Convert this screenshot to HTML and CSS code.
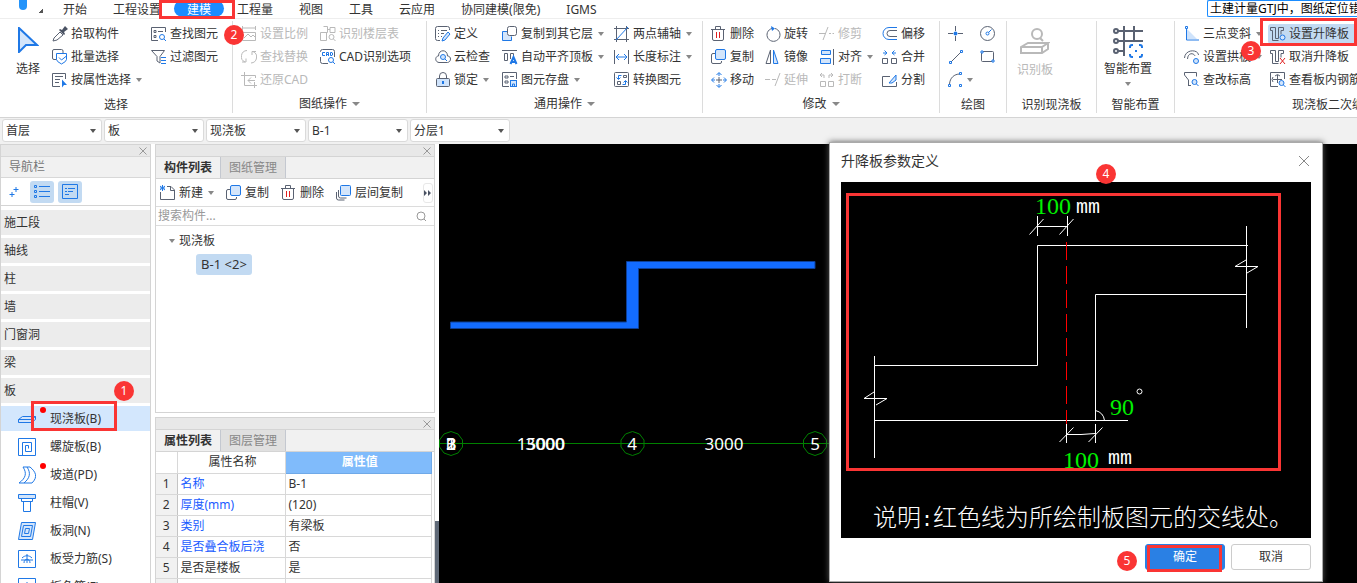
FILE: index.html
```html
<!DOCTYPE html>
<html lang="zh-CN">
<head>
<meta charset="utf-8">
<title>土建计量GTJ</title>
<link rel="stylesheet" href="styles.css">
</head>
<body>
<svg class="defs" aria-hidden="true">
  <symbol id="i-pick" viewBox="0 0 16 16"><path d="M1 15l1-3 6-6 3 3-6 5z"/><path class="k" d="M7 4l1-1 2 1 3-4 3 3-4 3 1 2-1 1z"/></symbol>
  <symbol id="i-batch" viewBox="0 0 16 16"><path d="M5 10.500H2Q.5 10.500.5 9V2Q.5.5 2 .5h7.500Q11 .5 11 2v2"/><path class="b w" d="M4.500 4.500h10v6q0 2-5 4.500-5-2.500-5-4.500z"/><path class="b" d="M7 8.500l2.500 2.500 5-4"/></symbol>
  <symbol id="i-prop" viewBox="0 0 16 16"><path d="M8 14.500H.5v-13h13V7M3 4.500h8M3 7.500h5M3 10.500h4"/><path class="s" d="M10 7.500v8l2-2.500h3z"/></symbol>
  <symbol id="i-find" viewBox="0 0 16 16"><path d="M7 14.500H.5v-13h14V6M3 4.500h2v2H3zM7 5.500h5M3 9.500h2v2H3z"/><circle class="b" cx="11" cy="11" r="2.500"/><path class="b" d="M13 13l2 2"/></symbol>
  <symbol id="i-filter" viewBox="0 0 16 16"><path d="M.5 1.500h13L9 7.500V14l-3-2V7.500z"/><path class="b" d="M10 8.500h5M10 11.500h5M10 14.500h5"/></symbol>
  <symbol id="i-scale" viewBox="0 0 16 16"><path class="g" d="M1.500 0v4M14.500 0v4M1 2h14M1.500 6.500h13v8h-13zM3 12l4-4 3 3 2-2 2 2"/></symbol>
  <symbol id="i-replace" viewBox="0 0 16 16"><path class="g" d="M6 1.500a6 6 0 00-2 11.500M10 14a6 6 0 002-11.500M1 13h4v-3.500M15 2.500h-4V6"/></symbol>
  <symbol id="i-restore" viewBox="0 0 16 16"><path class="g" d="M3.500 0v13.500H16M0 3.500h14.500V6M13.500 10v6M14 8.500H7m3-3l-3 3 3 3"/></symbol>
  <symbol id="i-floor" viewBox="0 0 16 16"><path class="g" d="M3.500.5h4v6h-4M.5 6.500v8h6v-8zM10 1.500h5v5h-5zM7.500 3.500H10"/><circle class="g" cx="11.500" cy="11" r="2.500"/><path class="g" d="M13.500 13l2 2"/></symbol>
  <symbol id="i-cad" viewBox="0 0 16 16"><path d="M8 14.500H2.500q-2 0-2-2V8M14.500 8V2.500q0-2-2-2h-10q-2 0-2 2V3"/><path class="b" d="M5 3.500H2.500v3H5M6.500 7V3.500h2V7M6.500 5.500h2M10.500 3.500v3h1.500q1.500-1.500 0-3z"/><circle class="b" cx="11" cy="11" r="2.500"/><path class="b" d="M13 13l2 2"/></symbol>
  <symbol id="i-define" viewBox="0 0 16 16"><path d="M5 14.500H2.500q-2 0-2-2v-10q0-2 2-2h10q2 0 2 2V4M3 4.500h1M6 4.500h6M3 7.500h1M6 7.500h3M3 10.500h1M6 10.500h1"/><path class="f" d="M7 15l1-3 5-6 2 2-5 6z"/></symbol>
  <symbol id="i-cloud" viewBox="0 0 16 16"><path d="M4 13.500C-.5 13 0 7 3.500 7 3.500 0 12.500 0 12.500 7c4 0 4 6 0 6.500z"/><circle class="f" cx="8" cy="8" r="2.500"/><path class="b" d="M10 10l2 2"/></symbol>
  <symbol id="i-lock" viewBox="0 0 16 16"><path d="M4.500 6V4q0-3.500 3.500-3.500T11.500 4v2"/><rect class="lf" x="1.500" y="6.500" width="13" height="8" rx="1"/><path class="s" d="M7 9h2v3H7z"/></symbol>
  <symbol id="i-copy" viewBox="0 0 16 16"><path d="M4 4.500H2q-1.500 0-1.500 1.500v7q0 1.500 1.500 1.500h7q1.500 0 1.500-1.500v-1"/><rect class="f" x="4.500" y=".5" width="10" height="10" rx="1.500"/></symbol>
  <symbol id="i-copyto" viewBox="0 0 16 16"><path class="f" d="M6.500 5.500h-6v9h9v-4"/><rect class="w" x="5.500" y=".5" width="9" height="9" rx="2"/></symbol>
  <symbol id="i-aligntop" viewBox="0 0 16 16"><path d="M0 1.500h15M2.500 4.500h3v7h-3zM8.500 10V4.500h3V7"/><path class="b h" d="M8.500 15l3-7 3 7M9.500 13h4"/></symbol>
  <symbol id="i-save" viewBox="0 0 16 16"><path d="M7 14.500H.5v-14h14V7M3 4h3v2H3zM8 4.500h4M3 9h3v2H3z"/><rect class="f" x="8.500" y="8.500" width="6" height="6"/><path class="b" d="M10.500 14v-2h2v2"/></symbol>
  <symbol id="i-axis" viewBox="0 0 16 16"><path d="M2.500 0v16M12.500 0v16M0 2.500h15M0 13.500h15"/><path class="b" d="M2 14L14 1"/></symbol>
  <symbol id="i-length" viewBox="0 0 16 16"><path d="M.5 1v14M14.500 1v14"/><path class="b" d="M2 8h11M5 5L2 8l3 3M10 5l3 3-3 3"/></symbol>
  <symbol id="i-convert" viewBox="0 0 16 16"><rect x=".5" y=".5" width="14" height="14" rx="1"/><path d="M3.500 9.500h3v3h-3zM9.500 3.500h3v2h-3z"/><path class="b" d="M7.500 3.500h-3V7M2.500 5.500l2 2 2-2M8.500 12.500h3V9M9.500 10.500l2-2 2 2"/></symbol>
  <symbol id="i-trash" viewBox="0 0 16 16"><path d="M0 3.500h14M4.500 3V.5h5V3M1.500 4v9q0 1.500 1.500 1.500h8q1.500 0 1.500-1.500V4"/><path class="r" d="M5.500 6v6M8.500 6v6"/></symbol>
  <symbol id="i-move" viewBox="0 0 16 16"><path class="b" d="M5.500 3L8 .5 10.500 3M5.500 13L8 15.500l2.500-2.500M3 5.500L.5 8 3 10.500M13 5.500L15.500 8 13 10.500M8 1v3M8 12v3M1 8h3M12 8h3"/><path d="M8 5v6M5 8h6"/></symbol>
  <symbol id="i-rotate" viewBox="0 0 16 16"><path d="M7 2.500a6.500 6.500 0 103 0"/><path class="s" d="M6 0l4 2.500L7 5z"/></symbol>
  <symbol id="i-mirror" viewBox="0 0 16 16"><path d="M5.500 1v13.500H1z"/><path class="f" d="M8.500 1v13.500H13z"/></symbol>
  <symbol id="i-extend" viewBox="0 0 16 16"><path class="g" d="M0 7.500h5M7 7.500h4M10 14l5-13"/></symbol>
  <symbol id="i-trim" viewBox="0 0 16 16"><path class="g" d="M0 7.500h7M10 7.500h2M13.500 7.500H15M4 14l5-13"/></symbol>
  <symbol id="i-align" viewBox="0 0 16 16"><path d="M14.500 0v16"/><path class="f" d="M2.500 1.500h9v4h-9zM1.500 9.500h10v5h-10z"/></symbol>
  <symbol id="i-break" viewBox="0 0 16 16"><path class="g" d="M1.500 9.500h5v5h-5zM9.500 9.500h5v5h-5zM5 6V3H1M3 1L1 3l2 2M10 6V3h4M12 1l2 2-2 2"/></symbol>
  <symbol id="i-offset" viewBox="0 0 16 16"><path class="b" d="M15 1.500H7a6 6 0 000 12h8"/><path d="M15 4.500H8a3 3 0 000 6h7"/></symbol>
  <symbol id="i-merge" viewBox="0 0 16 16"><path d="M.5 9.500h5v5h-5zM9.500 9.500h5v5h-5z"/><path class="b" d="M1 4h3M2.500 1.500L5 4 2.500 6M14 4h-3M12.500 1.500L10 4l2.500 2"/></symbol>
  <symbol id="i-split" viewBox="0 0 16 16"><path d="M8 4.500H.5v10h14V10"/><path class="f" d="M7 11l7-8v5l-4 3z"/></symbol>
  <symbol id="i-point" viewBox="0 0 16 16"><path d="M7.500 0v5M7.500 10v5M0 7.500h5M10 7.500h5"/><circle class="s" cx="7.500" cy="7.500" r="2"/></symbol>
  <symbol id="i-circle" viewBox="0 0 16 16"><circle cx="7.500" cy="7.500" r="7"/><path class="b" d="M8.500 6.500l3-3"/><circle class="b" cx="7.500" cy="7.500" r="1.500"/></symbol>
  <symbol id="i-line" viewBox="0 0 16 16"><path d="M3 13L13 3"/><path class="b" d="M1.500 12.500h2v2h-2zM12.500 1.500h2v2h-2z"/></symbol>
  <symbol id="i-rect" viewBox="0 0 16 16"><rect x="1.500" y="2.500" width="12" height="10" rx="1"/><path class="b w" d="M1 2h2v2H1zM12 11h2v2h-2z"/></symbol>
  <symbol id="i-arc" viewBox="0 0 16 16"><path d="M1.500 12C2 6 6 2 12 2"/><path class="b" d="M.5 12.500h2v2h-2zM11.500.5h2v2h-2zM11.500 12.500h2v2h-2z"/></symbol>
  <symbol id="i-slope" viewBox="0 0 16 16"><path class="lf n" d="M3 3l10 10H3z"/><path class="b" d="M2.500 2v12H15M1.500.5h2v2h-2z"/></symbol>
  <symbol id="i-arch" viewBox="0 0 16 16"><path d="M.5 9C1 0 14 0 14.500 6M3.500 10C4 3 10 4 11 7"/><circle class="f" cx="12" cy="12" r="2.500"/></symbol>
  <symbol id="i-elev" viewBox="0 0 16 16"><path d="M4.500 14V8L.5 3V.5h12v4M4.500 13.500H7"/><circle class="f" cx="10.500" cy="10" r="2.500"/><path class="b" d="M12.500 12l2 2"/></symbol>
  <symbol id="i-lift" viewBox="0 0 16 16"><path d="M.5 1.500h5v11h3v-11h5v3H11v4M.5 1.500v3h2v10h6"/><circle class="f" cx="12.500" cy="11.500" r="2.500"/></symbol>
  <symbol id="i-unlift" viewBox="0 0 16 16"><path d="M.5 1.500h5v11h3v-11h5v3H11v4M.5 1.500v3h2v10h6"/><path class="r" d="M10 9l5 6M15 9l-5 6"/></symbol>
  <symbol id="i-rebar" viewBox="0 0 16 16"><path d="M8 14.500H.5V.5h14V7M3 7.500h9M7.500 3v8M5 4l2.500-1.500L10 4M3 5L2 7.500 3 10"/><circle class="f" cx="11.500" cy="11" r="2.500"/><path class="b" d="M13.500 13l2 2"/></symbol>
  <symbol id="i-new" viewBox="0 0 16 16"><path d="M7 1.500h4l3.500 3.500v9.500H.5V7M10.500 2v3.500H14"/><path class="b" d="M0 1l5 4M5 1L0 5M2.500 0v6M0 3h5"/></symbol>
  <symbol id="i-layers" viewBox="0 0 16 16"><path d="M.5 7v6q0 2 2 2h6M2.500 5v6q0 2 2 2h6"/><rect class="f" x="4.500" y=".5" width="10" height="10" rx="1"/></symbol>
  <symbol id="n-slab" viewBox="0 0 18 18"><path class="f" d="M.5 9.500l4-3h13v3l-4 3H.5zM.5 9.500h13l4-3"/></symbol>
  <symbol id="n-spiral" viewBox="0 0 18 18"><path class="b" d="M.5 17.500V.5h17v17zM4.500 17V4.500h9v9h-6v-6h3v3"/></symbol>
  <symbol id="n-ramp" viewBox="0 0 18 18"><path class="b" d="M5 1h7c6 5 8 10 2 16M5 1c4 6 3 11-4 16M1 17h13M9 1c4 6 3 11-3 16"/></symbol>
  <symbol id="n-cap" viewBox="0 0 18 18"><path class="f" d="M.5.5h17v4H.5z"/><path class="b" d="M3.500 4.500h11v3h-11zM5.500 7.500h7v10h-7z"/></symbol>
  <symbol id="n-hole" viewBox="0 0 18 18"><path class="f" d="M3.500.5h14l-3 17H.5z"/><path class="b" d="M5.500 3.500h9l-2 11h-9zM7.500 6.500h4l-1 5h-4z"/></symbol>
  <symbol id="n-bar" viewBox="0 0 18 18"><path class="b" d="M.5.5h17v17H.5zM9 4v9M4 8c3-3 7-3 10 0M3 10h12M6 13c0-5 6-5 6 0"/></symbol>
</svg>

<div class="app">
  <header>
    <nav class="menu">
      <svg class="drop" viewBox="0 0 10 11"><path d="M1 0h8v6a4 4 0 01-8 0z"/></svg>
      <span class="corner"></span>
      <a href="#">开始</a><a href="#">工程设置</a><a href="#" class="on">建模</a><a href="#">工程量</a><a href="#">视图</a><a href="#">工具</a><a href="#">云应用</a><a href="#">协同建模(限免)</a><a href="#">IGMS</a>
      <input class="tip" aria-label="搜索帮助" value="土建计量GTJ中，图纸定位错误怎么办">
    </nav>

    <div class="ribbon">
      <section class="group g1">
        <div class="cols">
          <button class="big"><svg viewBox="0 0 22 26"><path class="f h" d="M2 1l18 17H9l-7 7z"/></svg>选择</button>
          <div><button class="tool"><svg><use href="#i-pick"/></svg>拾取构件</button><button class="tool"><svg><use href="#i-batch"/></svg>批量选择</button><button class="tool arrow"><svg><use href="#i-prop"/></svg>按属性选择</button></div>
          <div><button class="tool"><svg><use href="#i-find"/></svg>查找图元</button><button class="tool"><svg><use href="#i-filter"/></svg>过滤图元</button></div>
        </div>
        <h2>选择</h2>
      </section>
      <section class="group g2">
        <div class="cols">
          <div><button class="tool" disabled><svg><use href="#i-scale"/></svg>设置比例</button><button class="tool" disabled><svg><use href="#i-replace"/></svg>查找替换</button><button class="tool" disabled><svg><use href="#i-restore"/></svg>还原CAD</button></div>
          <div><button class="tool" disabled><svg><use href="#i-floor"/></svg>识别楼层表</button><button class="tool"><svg><use href="#i-cad"/></svg>CAD识别选项</button></div>
        </div>
        <h2 class="arrow">图纸操作</h2>
      </section>
      <section class="group g3">
        <div class="cols">
          <div><button class="tool"><svg><use href="#i-define"/></svg>定义</button><button class="tool"><svg><use href="#i-cloud"/></svg>云检查</button><button class="tool arrow"><svg><use href="#i-lock"/></svg>锁定</button></div>
          <div><button class="tool arrow"><svg><use href="#i-copyto"/></svg>复制到其它层</button><button class="tool arrow"><svg><use href="#i-aligntop"/></svg>自动平齐顶板</button><button class="tool arrow"><svg><use href="#i-save"/></svg>图元存盘</button></div>
          <div><button class="tool arrow"><svg><use href="#i-axis"/></svg>两点辅轴</button><button class="tool arrow"><svg><use href="#i-length"/></svg>长度标注</button><button class="tool"><svg><use href="#i-convert"/></svg>转换图元</button></div>
        </div>
        <h2 class="arrow">通用操作</h2>
      </section>
      <section class="group g4">
        <div class="cols">
          <div><button class="tool"><svg><use href="#i-trash"/></svg>删除</button><button class="tool"><svg><use href="#i-copy"/></svg>复制</button><button class="tool"><svg><use href="#i-move"/></svg>移动</button></div>
          <div><button class="tool"><svg><use href="#i-rotate"/></svg>旋转</button><button class="tool"><svg><use href="#i-mirror"/></svg>镜像</button><button class="tool" disabled><svg><use href="#i-extend"/></svg>延伸</button></div>
          <div><button class="tool" disabled><svg><use href="#i-trim"/></svg>修剪</button><button class="tool arrow"><svg><use href="#i-align"/></svg>对齐</button><button class="tool" disabled><svg><use href="#i-break"/></svg>打断</button></div>
          <div><button class="tool"><svg><use href="#i-offset"/></svg>偏移</button><button class="tool"><svg><use href="#i-merge"/></svg>合并</button><button class="tool"><svg><use href="#i-split"/></svg>分割</button></div>
        </div>
        <h2 class="arrow">修改</h2>
      </section>
      <section class="group g5">
        <div class="cols">
          <div><button class="tool" aria-label="点"><svg><use href="#i-point"/></svg></button><button class="tool" aria-label="直线"><svg><use href="#i-line"/></svg></button><button class="tool arrow tight" aria-label="弧"><svg><use href="#i-arc"/></svg></button></div>
          <div><button class="tool" aria-label="圆"><svg><use href="#i-circle"/></svg></button><button class="tool" aria-label="矩形"><svg><use href="#i-rect"/></svg></button></div>
        </div>
        <h2>绘图</h2>
      </section>
      <section class="group g6">
        <div class="cols">
          <button class="big" disabled><svg class="wide" viewBox="0 0 30 28"><circle class="g h" cx="17" cy="7" r="5"/><path class="g h" d="M20 11l3 3M1 20l7-4h20l-6 4zM1 20v6h21l6-4v-6M22 20v6"/></svg>识别板</button>
        </div>
        <h2>识别现浇板</h2>
      </section>
      <section class="group g7">
        <div class="cols">
          <button class="big more"><svg class="wide tall" viewBox="0 0 32 32"><path class="h" d="M6 5h25M6 15h25M6 25h6M12 0v30M22 0v15"/><circle class="h" cx="4" cy="5" r="2"/><circle class="h" cx="4" cy="15" r="2"/><circle class="h" cx="4" cy="25" r="2"/><path class="b h" d="M18 22v-1q0-2 2-2h1M27 19h1q2 0 2 2v1M30 28v1q0 2-2 2h-1M21 31h-1q-2 0-2-2v-1M23 25h2"/></svg>智能布置</button>
        </div>
        <h2>智能布置</h2>
      </section>
      <section class="group g8">
        <div class="cols">
          <div><button class="tool arrow"><svg><use href="#i-slope"/></svg>三点变斜</button><button class="tool arrow"><svg><use href="#i-arch"/></svg>设置拱板</button><button class="tool"><svg><use href="#i-elev"/></svg>查改标高</button></div>
          <div><button class="tool lit"><svg><use href="#i-lift"/></svg>设置升降板</button><button class="tool"><svg><use href="#i-unlift"/></svg>取消升降板</button><button class="tool"><svg><use href="#i-rebar"/></svg>查看板内钢筋</button></div>
        </div>
        <h2>现浇板二次编辑</h2>
      </section>
    </div>
  </header>

  <div class="pickers">
    <label><select aria-label="楼层"><option>首层</option></select></label>
    <label><select aria-label="类别"><option>板</option></select></label>
    <label><select aria-label="构件类型"><option>现浇板</option></select></label>
    <label><select aria-label="构件"><option>B-1</option></select></label>
    <label><select aria-label="分层"><option>分层1</option></select></label>
  </div>

  <main>
    <aside class="panel nav">
      <div class="grip"><button aria-label="关闭"><svg viewBox="0 0 8 8"><path d="M.5.5l7 7M7.500.5l-7 7"/></svg></button></div>
      <h3>导航栏</h3>
      <div class="navtools">
        <button aria-label="展开"><svg viewBox="0 0 16 16"><path class="b" d="M7.500 5.500h5M10 3v5M3.500 10.500h5M6 8v5"/></svg></button>
        <button class="set" aria-label="列表"><svg viewBox="0 0 16 16"><path class="b" d="M.5 1.500h2v2h-2zM.5 6.500h2v2h-2zM.5 11.500h2v2h-2zM5 2.500h11M5 7.500h11M5 12.500h11"/></svg></button>
        <button class="set" aria-label="详情"><svg viewBox="0 0 16 16"><path class="b" d="M.5.5h15v14H.5zM3 4.500h2M6 4.500h7M3 7.500h2M6 7.500h5M3 10.500h4"/></svg></button>
      </div>
      <ul class="cats"><li>施工段</li><li>轴线</li><li>柱</li><li>墙</li><li>门窗洞</li><li>梁</li><li>板</li></ul>
      <ul class="subs">
        <li class="cur dot"><svg><use href="#n-slab"/></svg>现浇板(B)</li>
        <li><svg><use href="#n-spiral"/></svg>螺旋板(B)</li>
        <li class="dot"><svg><use href="#n-ramp"/></svg>坡道(PD)</li>
        <li><svg><use href="#n-cap"/></svg>柱帽(V)</li>
        <li><svg><use href="#n-hole"/></svg>板洞(N)</li>
        <li><svg><use href="#n-bar"/></svg>板受力筋(S)</li>
        <li><svg><use href="#n-bar"/></svg>板负筋(F)</li>
      </ul>
    </aside>

    <div class="side">
      <section class="panel list">
        <div class="grip"><button aria-label="关闭"><svg viewBox="0 0 8 8"><path d="M.5.5l7 7M7.500.5l-7 7"/></svg></button></div>
        <div class="tabs"><button class="on">构件列表</button><button>图纸管理</button></div>
        <div class="bar">
          <button class="tool arrow"><svg><use href="#i-new"/></svg>新建</button><button class="tool"><svg><use href="#i-copy"/></svg>复制</button><button class="tool"><svg><use href="#i-trash"/></svg>删除</button><button class="tool"><svg><use href="#i-layers"/></svg>层间复制</button>
          <button class="overflow" aria-label="更多"><svg viewBox="0 0 8 6"><path class="k" d="M0 0l3 3-3 3zM4 0l3 3-3 3z"/></svg></button>
        </div>
        <div class="search"><input aria-label="搜索构件" placeholder="搜索构件..."><svg viewBox="0 0 11 11"><circle cx="5" cy="5" r="4"/><path d="M8 8l2 2"/></svg></div>
        <div class="tree"><div class="branch">现浇板</div><div class="leaf">B-1 &lt;2&gt;</div></div>
      </section>
      <section class="panel props">
        <div class="grip"><button aria-label="关闭"><svg viewBox="0 0 8 8"><path d="M.5.5l7 7M7.500.5l-7 7"/></svg></button></div>
        <div class="tabs"><button class="on">属性列表</button><button>图层管理</button></div>
        <table>
          <thead><tr><th></th><th>属性名称</th><th class="val">属性值</th></tr></thead>
          <tbody>
            <tr><td>1</td><td class="key">名称</td><td>B-1</td></tr>
            <tr><td>2</td><td class="key">厚度(mm)</td><td>(120)</td></tr>
            <tr><td>3</td><td class="key">类别</td><td>有梁板</td></tr>
            <tr><td>4</td><td class="key">是否叠合板后浇</td><td>否</td></tr>
            <tr><td>5</td><td>是否是楼板</td><td>是</td></tr>
            <tr><td></td><td></td><td></td></tr>
          </tbody>
        </table>
      </section>
    </div>
    <div class="splitter"><span></span></div>

    <div class="canvas">
      <svg class="plan">
        <g transform="translate(-439 -144)">
          <path class="slab" d="M450.500 322H626.500V261.500H815V268.500H638.500V328.500H450.500z"/>
          <path class="axis" d="M439 443.500H829"/>
          <g class="axis">
            <path d="M451 431.500l7 2.500 4.500 6v7l-4.500 6-7 2.500-7-2.500-4.500-6v-7l4.500-6z"/>
            <path d="M632.500 431.500l7 2.500 4.500 6v7l-4.500 6-7 2.500-7-2.500-4.500-6v-7l4.500-6z"/>
            <path d="M815 431.500l7 2.500 4.500 6v7l-4.500 6-7 2.500-7-2.500-4.500-6v-7l4.500-6z"/>
          </g>
          <g class="dim">
            <text x="451" y="450">1</text><text x="451" y="450">2</text><text x="451" y="450">3</text><text x="451" y="450">B</text>
            <text x="541" y="450">15000</text><text x="545" y="450">3000</text>
            <text x="632" y="450">4</text><text x="724" y="450">3000</text><text x="815" y="450">5</text>
          </g>
        </g>
      </svg>

      <div class="dialog" role="dialog" aria-labelledby="dlg">
        <div class="dhead"><h1 id="dlg">升降板参数定义</h1><button aria-label="关闭"><svg viewBox="0 0 12 12"><path d="M1 1l10 10M11 1L1 11"/></svg></button></div>
        <svg class="figure" viewBox="841 182 470 356">
          <path class="ln" d="M1037.500 216v20M1067.500 216v20M1037.500 226.500h30M1029.500 234.500l14-15.500M1059.500 234.500l14-15.500"/>
          <path class="ln" d="M874 365.500h163.500v-120H1248M874 420.500h254M1095.500 420V294.500h151M874.500 356v102M1246.500 226v102"/>
          <path class="ln" d="M874 392l-10 6.500h23l-11 6.500M1246 260l-11 6.500h23l-11 6.500M1095.500 410.500q8 2 9 10"/>
          <path class="ln" d="M1066.500 424v19M1095.500 424v19M1067 434.500h14l14-1M1059.500 442l14-14.500M1088.500 442l14-14.500"/>
          <path class="cut" d="M1066.500 242v182"/>
          <g class="num"><text x="1035" y="214">100</text><text x="1110" y="415">90</text><text x="1063" y="468">100</text></g>
          <g class="unit"><text x="1076" y="213">mm</text><text x="1108" y="464">mm</text></g>
          <circle class="ln" cx="1139.500" cy="391.500" r="2.500"/>
          <text class="note" x="873" y="526">说明<tspan class="colon">:</tspan>红色线为所绘制板图元的交线处。</text>
        </svg>
        <div class="dfoot"><button class="ok">确定</button><button>取消</button></div>
        <span class="frame f4"></span><span class="frame f5"></span>
        <b class="badge b4">4</b><b class="badge b5">5</b>
      </div>
    </div>
  </main>

  <span class="frame f1"></span><span class="frame f2"></span><span class="frame f3"></span>
  <b class="badge b1">1</b><b class="badge b2">2</b><b class="badge b3">3</b>
</div>
</body>
</html>
```
FILE: styles.css
```css
* { box-sizing: border-box; }
body { margin: 0; overflow: hidden; font: 12px/18px "Noto Sans", "Noto Sans CJK SC", sans-serif; color: #333; background: #fff; }
button, input, select { font: inherit; color: inherit; border: 0; padding: 0; background: none; }
h1, h2, h3, ul { margin: 0; padding: 0; font-size: 12px; font-weight: 400; list-style: none; }
.defs { position: absolute; width: 0; height: 0; }
svg { flex: none; fill: none; stroke: #5a6272; stroke-width: 1; }

.b { stroke: #1f78e6; }
.f { stroke: #1f78e6; fill: #d3e5fb; }
.lf { fill: #cfe3fb; }
.w { fill: #fff; }
.s { fill: #1f78e6; stroke: none; }
.k { fill: #4a5263; stroke: none; }
.g { stroke: #b9b9b9; }
.r { stroke: #e02020; }
.n { stroke: none; }
.h { stroke-width: 2; }

.app { position: relative; display: flex; flex-direction: column; height: 100vh; overflow: hidden; }

/* Menu row */
.menu { display: flex; height: 19px; padding-left: 18px; border-bottom: 1px solid #eee; white-space: nowrap; }
.menu a { padding: 0 13px; color: #333; text-decoration: none; line-height: 19px; }
.menu .on { height: 17px; border-radius: 9px; background: #1a8cff; color: #fff; }
.drop { width: 10px; height: 11px; }
.drop path { fill: #2393fa; stroke: none; }
.corner { width: 4px; height: 4px; margin: 9px 7px 0 11px; background: linear-gradient(135deg, transparent 50%, #555 50%); }
.tip { width: 150px; height: 17px; margin-left: auto; padding-left: 2px; border: 1px solid #1a8cff; border-right: 0; border-radius: 2px 0 0 2px; color: #000; }

/* Ribbon */
.ribbon { display: flex; padding: 2px 0 4px; border-bottom: 1px solid #d4d4d4; overflow: hidden; white-space: nowrap; }
.group { flex: none; border-right: 1px solid #dcdcdc; }
.cols { display: grid; height: 70px; padding: 1px 0 0 8px; }
.group h2 { padding-top: 4px; height: 22px; line-height: 20px; text-align: center; }
.group h2.arrow { padding-top: 3px; }
.g1 .cols { padding-left: 9px; grid-template-columns: 43px 99px 81px; }
.g2 .cols { grid-template-columns: 79px 106px; }
.g3 .cols { grid-template-columns: 67px 112px 88px; }
.g4 .cols { grid-template-columns: 54px 54px 63px 57px; }
.g5 .cols { grid-template-columns: 32px 26px; }
.g6 .cols { padding-left: 9px; grid-template-columns: 80px; }
.g7 .cols { padding-left: 6px; grid-template-columns: 71px; }
.g8 .cols { padding-left: 9px; grid-template-columns: 86px 223px; }
.tool { display: flex; align-items: center; gap: 3px; height: 23px; white-space: nowrap; }
.tool svg { width: 16px; height: 16px; }
.tool:disabled, .big:disabled { color: #b9b9b9; }
.arrow::after { content: ""; border: 3px solid transparent; border-top: 4px solid #888; border-bottom: 0; margin-left: 2px; }
.tight::after { margin-left: 0; }
h2.arrow::after { display: inline-block; border-width: 4px 4px 0; margin: 0 0 2px 5px; }
.lit { width: 120px; height: 20px; margin: 2px 0 1px -2px; padding-left: 2px; border-radius: 3px; background: #c2daf2; }
.big { display: flex; flex-direction: column; align-items: center; justify-self: start; width: 38px; height: 69px; padding-top: 5px; }
.big svg { width: 22px; height: 26px; margin-bottom: 7px; }
.big svg.wide { width: 30px; height: 28px; margin-bottom: 6px; }
.big svg.tall { width: 32px; height: 32px; margin-bottom: 2px; }
.more { width: 50px; padding-top: 4px; }
.more::after { content: ""; margin-top: 4px; border: 3px solid transparent; border-top: 4px solid #888; border-bottom: 0; }

/* Floor and component pickers */
.pickers { display: flex; flex: none; gap: 2px; height: 26px; padding: 1px 2px 3px; background: #f1f1f1; }
.pickers label { position: relative; width: 100px; }
.pickers label::after { content: ""; position: absolute; right: 6px; top: 10px; border: 3px solid transparent; border-top: 4px solid #555; border-bottom: 0; }
.pickers select { width: 100%; height: 23px; padding-left: 3px; appearance: none; border: 1px solid #dadada; border-radius: 3px; background: #fff; }

main { display: flex; flex: 1; min-height: 0; }
.panel { border: 1px solid #d4d4d4; background: #fff; overflow: hidden; }
.grip { display: flex; justify-content: flex-end; align-items: center; height: 11px; padding-right: 3px; background: #e8e8e8; }
.grip button { display: flex; }
.grip svg { width: 8px; height: 8px; stroke: #999; }

/* Navigation */
.nav { flex: none; width: 151px; border-bottom: 0; }
.nav h3 { height: 22px; padding-left: 8px; line-height: 20px; color: #777; background: #f1f1f1; border: solid #d8d8d8; border-width: 1px 0; }
.navtools { display: flex; align-items: center; gap: 4px; height: 28px; padding-left: 1px; border-bottom: 1px solid #d4d4d4; }
.navtools button { display: grid; place-items: center; width: 24px; height: 22px; border-radius: 3px; }
.navtools svg { width: 16px; height: 16px; }
.navtools .set { background: #c2daf2; }
.cats, .subs { display: grid; gap: 3px; padding-top: 3px; }
.cats { padding-top: 4px; }
.cats li { height: 25px; padding-left: 3px; line-height: 26px; background: #ececec; }
.subs li { position: relative; display: flex; align-items: center; gap: 14px; height: 25px; padding-left: 17px; }
.subs svg { width: 18px; height: 18px; }
.subs .cur { background: #d3e7fd; }
.dot::before { content: ""; position: absolute; left: 39px; top: 1px; width: 6px; height: 6px; border-radius: 50%; background: #f00; }

/* Component list and properties */
.side { display: flex; flex: none; flex-direction: column; gap: 4px; width: 280px; margin-left: 4px; }
.list { height: 269px; flex: none; }
.props { flex: 1; border-bottom: 0; }
.tabs { display: flex; height: 23px; background: #f1f1f1; border: solid #d4d4d4; border-width: 1px 0; }
.tabs button { width: 65px; color: #888; background: #e0e0e0; border-right: 1px solid #c4c8d0; }
.tabs .on { font-weight: 700; color: #333; background: #f1f1f1; }
.bar { display: flex; align-items: center; gap: 12px; height: 28px; padding-left: 4px; border-bottom: 1px solid #dcdcdc; }
.overflow { display: grid; place-items: center; width: 10px; height: 20px; margin: 0 1px 0 auto; border: 1px solid #e8e8e8; border-radius: 3px; }
.overflow svg { width: 8px; height: 6px; }
.search { display: flex; align-items: center; height: 19px; padding: 0 7px 0 2px; border-bottom: 1px solid #dcdcdc; }
.search input { flex: 1; min-width: 0; outline: 0; }
.search input::placeholder { color: #999; }
.search svg { width: 11px; height: 11px; stroke: #999; }
.tree { padding: 6px 0 0 13px; }
.branch { display: flex; align-items: center; gap: 4px; line-height: 18px; }
.branch::before { content: ""; border: 3px solid transparent; border-top: 4px solid #888; border-bottom: 0; }
.leaf { width: 56px; margin: 4px 0 0 27px; line-height: 21px; border-radius: 3px; background: #c2daf2; font-size: 13px; text-align: center; }
table { width: 276px; border-collapse: collapse; table-layout: fixed; }
td, th { height: 21px; padding: 0 0 0 3px; border: 1px solid #d8d8d8; border-top: 0; font-weight: 400; line-height: 18px; }
td:first-child { background: #f1f1f1; border-right-color: #c4c4c4; text-align: center; padding: 0; }
th:first-child { width: 21px; }
th:nth-child(2) { width: 108px; }
tr > :first-child { border-left: 0; }
th.val { background: #80bbfb; color: #fff; font-weight: 700; border-color: #6fa9e8; }
.key { color: #1a5cff; }
.splitter { display: flex; flex: none; align-items: flex-end; width: 4px; }
.splitter span { width: 4px; height: 62px; background: #5f6977; }

/* Model view */
.canvas { position: relative; flex: 1; background: #000; }
.plan { position: absolute; width: 100%; height: 100%; }
.slab { fill: #136cff; stroke: #0d3f96; }
.axis { stroke: #008000; }
.dim { fill: #fff; stroke: none; font-size: 17px; text-anchor: middle; }

/* Parameter dialog */
.dialog { position: absolute; left: 390px; top: -2px; width: 494px; padding: 0 11px 11px; border: 1px solid #aaa; background: #fff; box-shadow: 0 0 6px #555; }
.dhead { display: flex; justify-content: space-between; align-items: center; height: 39px; padding: 0 1px 3px 0; }
.dhead h1 { font-size: 14px; }
.dhead svg { display: block; width: 12px; height: 12px; stroke: #888; }
.figure { display: block; width: 100%; background: #000; }
.ln { stroke: #fff; }
.cut { stroke: #f00; stroke-dasharray: 18 6; }
.num { fill: #00f000; stroke: none; font: 24px "Liberation Serif", serif; }
.unit { fill: #fff; stroke: none; font: 20px "Liberation Mono", monospace; }
.note { fill: #fff; stroke: none; font: 300 24px "Noto Sans CJK SC", sans-serif; }
.colon { font: 20px "Liberation Mono", monospace; }
.dfoot { display: flex; justify-content: flex-end; gap: 6px; padding-top: 6px; }
.dfoot button { width: 80px; height: 26px; border: 1px solid #ccc; border-radius: 3px; }
.dfoot .ok { border-color: #2a80e4; background: #2a80e4; color: #fff; }

/* Step callouts */
.frame { position: absolute; border: 3px solid #fa3534; pointer-events: none; }
.f1 { left: 31px; top: 401px; width: 86px; height: 30px; }
.f2 { left: 159px; top: 0; width: 76px; height: 19px; }
.f3 { right: 0; top: 18px; width: 97px; height: 28px; }
.f4 { left: 16px; top: 50px; width: 435px; height: 278px; }
.f5 { left: 317px; top: 402px; width: 75px; height: 27px; }
.badge { position: absolute; width: 20px; height: 20px; border-radius: 50%; background: #fa3534; color: #fff; font-weight: 400; line-height: 20px; text-align: center; }
.b1 { left: 114px; top: 381px; }
.b2 { left: 224px; top: 25px; }
.b3 { right: 96px; top: 41px; }
.b4 { left: 266px; top: 21px; }
.b5 { left: 287px; top: 408px; }
```
